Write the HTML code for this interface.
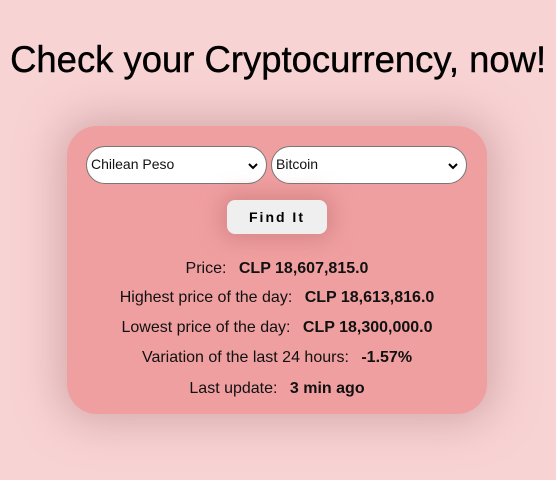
<!DOCTYPE html>
<html><head><style>
*{margin:0;padding:0;box-sizing:border-box}
body{width:556px;height:480px;background:#f8d3d4;font-family:"Liberation Sans",sans-serif;position:relative;overflow:hidden}
h1{position:absolute;left:0;width:556px;top:39px;text-align:center;font-weight:normal;font-size:37px;color:#000;white-space:nowrap}
h1 span{display:inline-block;transform:scaleX(0.985);-webkit-text-stroke:0.4px #000}
.card{position:absolute;left:67px;top:126px;width:420px;height:288px;background:#f09fa0;border-radius:30px;box-shadow:0 0 40px 10px rgba(190,140,140,.55)}
.sel{position:absolute;top:146px;height:38px;background:#fff;border:1px solid #777;border-radius:20px;font-size:14px;padding:9px 0 0 4px;color:#111}
.sel svg{position:absolute;right:8px;top:15px}
.btn{position:absolute;left:227px;top:200px;width:100px;height:34px;background:#efefef;border-radius:8px;text-align:center;line-height:34px;font-size:14px;font-weight:bold;letter-spacing:2px;box-shadow:0 0 20px 6px rgba(200,120,120,.6)}
.l{position:absolute;left:67px;width:420px;text-align:center;font-size:16px;color:#111;white-space:nowrap}
.l b{margin-left:8px}
</style></head><body>
<h1><span>Check your Cryptocurrency, now!</span></h1>
<div class="card"></div>
<div class="sel" style="left:86px;width:181px">Chilean Peso<svg width="10" height="8" viewBox="0 0 10 8"><path d="M1 2l4 4 4-4" stroke="#000" stroke-width="2" fill="none"/></svg></div>
<div class="sel" style="left:271px;width:196px">Bitcoin<svg width="10" height="8" viewBox="0 0 10 8"><path d="M1 2l4 4 4-4" stroke="#000" stroke-width="2" fill="none"/></svg></div>
<div class="btn">Find It</div>
<div class="l" style="top:260px">Price: <b>CLP 18,607,815.0</b></div>
<div class="l" style="top:289px">Highest price of the day: <b>CLP 18,613,816.0</b></div>
<div class="l" style="top:319px">Lowest price of the day: <b>CLP 18,300,000.0</b></div>
<div class="l" style="top:349px">Variation of the last 24 hours: <b>-1.57%</b></div>
<div class="l" style="top:380px">Last update: <b>3 min ago</b></div>
</body></html>
